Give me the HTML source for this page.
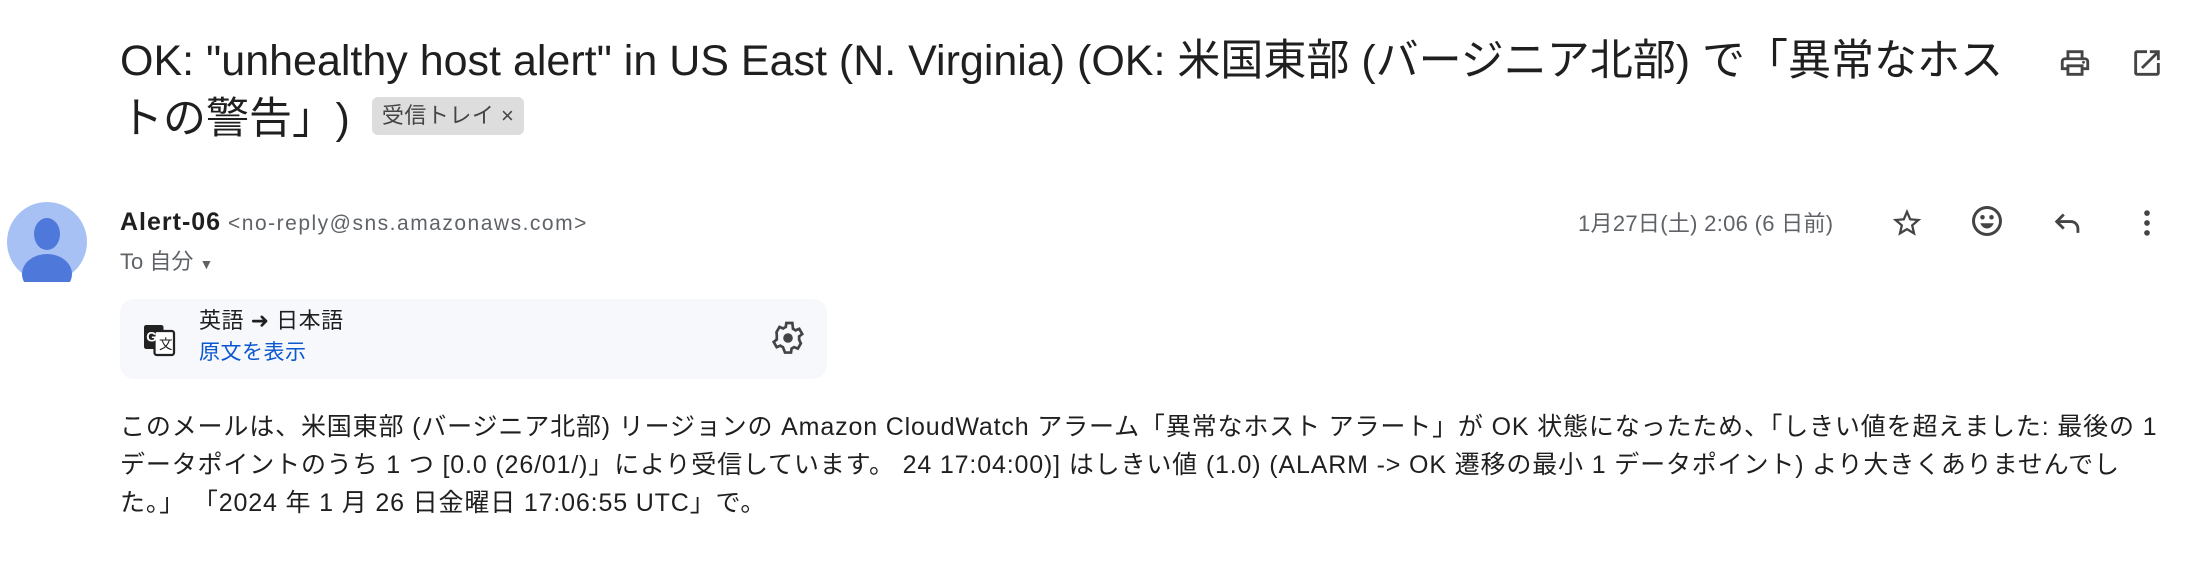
<!DOCTYPE html>
<html><head><meta charset="utf-8"><style>
body{margin:0;width:2208px;height:564px;background:#fff;font-family:"Liberation Sans","Noto Sans CJK JP",sans-serif;color:#1f1f1f;position:relative;overflow:hidden}
.a{position:absolute;white-space:nowrap}
.t{font-size:43px;left:120px;line-height:58px}
.chip{display:inline-block;background:#ddd;color:#444;font-size:22px;line-height:38px;height:38px;padding:0 10px;border-radius:6px;vertical-align:middle;position:relative;top:-6px;margin-left:22px;letter-spacing:0.5px}
.g{color:#5f6368}
.body{font-size:25px;left:120px;line-height:38px;top:408px;letter-spacing:0.85px}
</style></head><body>
<div class="a t" style="top:32px">OK: "unhealthy host alert" in US East (N. Virginia) (OK: 米国東部 (バージニア北部) で「異常なホス</div>
<div class="a t" style="top:90px">トの警告」<span style="margin-left:22px">)</span><span class="chip">受信トレイ ×</span></div>
<svg class="a" style="left:2058px;top:46px" width="34" height="34" viewBox="0 0 24 24" fill="#444"><path d="M19 8h-1V3H6v5H5c-1.66 0-3 1.34-3 3v6h4v4h12v-4h4v-6c0-1.66-1.34-3-3-3zM8 5h8v3H8V5zm8 14H8v-4h8v4zm2-4v-2H6v2H4v-4c0-.55.45-1 1-1h14c.55 0 1 .45 1 1v4h-2z"/><circle cx="18" cy="11.5" r="1"/></svg>
<svg class="a" style="left:2130px;top:46px" width="34" height="34" viewBox="0 0 24 24" fill="#444"><path d="M19 19H5V5h7V3H5c-1.11 0-2 .9-2 2v14c0 1.1.89 2 2 2h14c1.1 0 2-.9 2-2v-7h-2v7zM14 3v2h3.59l-9.83 9.83 1.41 1.41L19 6.41V10h2V3h-7z"/></svg>
<svg class="a" style="left:7px;top:202px" width="80" height="80" viewBox="0 0 80 80"><circle cx="40" cy="40" r="40" fill="#a8c1f5"/><ellipse cx="40" cy="32" rx="13" ry="16" fill="#4f78db"/><ellipse cx="40" cy="72" rx="25" ry="20" fill="#4f78db"/></svg>
<div class="a" style="left:120px;top:206px;font-size:25px;line-height:32px"><b style="letter-spacing:1px">Alert-06</b> <span class="g" style="font-size:21px;letter-spacing:1.5px">&lt;no-reply@sns.amazonaws.com&gt;</span></div>
<div class="a g" style="left:120px;top:246px;font-size:22px;line-height:32px">To 自分 <span style="font-size:14px">▼</span></div>
<div class="a g" style="left:1578px;top:208px;font-size:22px;line-height:32px;letter-spacing:0.3px">1月27日(土) 2:06 (6 日前)</div>
<svg class="a" style="left:1890px;top:206px" width="34" height="34" viewBox="0 0 24 24" fill="#444"><path d="M22 9.24l-7.19-.62L12 2 9.19 8.63 2 9.24l5.46 4.73L5.82 21 12 17.27 18.18 21l-1.63-7.03L22 9.24zM12 15.4l-3.76 2.27 1-4.28-3.32-2.88 4.38-.38L12 6.1l1.71 4.04 4.38.38-3.32 2.88 1 4.28L12 15.4z"/></svg>
<svg class="a" style="left:1969px;top:203px" width="36" height="36" viewBox="0 0 24 24" fill="#444"><path d="M12 2a10 10 0 100 20 10 10 0 000-20zm0 18a8 8 0 110-16 8 8 0 010 16z"/><circle cx="9" cy="9.5" r="1.5"/><circle cx="15" cy="9.5" r="1.5"/><path d="M7.5 13.5h9c-.8 2-2.6 3.5-4.5 3.5s-3.7-1.5-4.5-3.5z"/></svg>
<svg class="a" style="left:2051px;top:206px" width="34" height="34" viewBox="0 0 24 24" fill="none" stroke="#444" stroke-width="2"><path d="M9 6l-5 5 5 5"/><path d="M4 11h10a5 5 0 015 5v3"/></svg>
<svg class="a" style="left:2130px;top:206px" width="34" height="34" viewBox="0 0 24 24" fill="#444"><circle cx="12" cy="5" r="2"/><circle cx="12" cy="12" r="2"/><circle cx="12" cy="19" r="2"/></svg>
<div class="a" style="left:120px;top:299px;width:707px;height:80px;background:#f6f8fc;border-radius:14px"></div>
<svg class="a" style="left:141px;top:322px" width="36" height="36" viewBox="0 0 24 24"><rect x="2" y="2" width="13" height="16" rx="1.5" fill="#222"/><rect x="9" y="6" width="13" height="16" rx="1.5" fill="#fff" stroke="#222" stroke-width="1.5"/><text x="3.5" y="13" font-size="9" fill="#fff" font-family="Liberation Sans" font-weight="bold">G</text><text x="12" y="18" font-size="9" fill="#222" font-family="Noto Sans CJK JP">文</text></svg>
<div class="a" style="left:199px;top:305px;font-size:22px;line-height:32px;letter-spacing:0.5px">英語 ➜ 日本語</div>
<div class="a" style="left:199px;top:337px;font-size:21px;line-height:32px;color:#0b57d0;letter-spacing:0.5px">原文を表示</div>
<svg class="a" style="left:770px;top:320px" width="36" height="36" viewBox="0 0 24 24" fill="none" stroke="#444" stroke-width="1.8"><path d="M19.4 13c.04-.33.06-.66.06-1s-.02-.67-.06-1l2.1-1.65-2-3.46-2.49 1c-.52-.4-1.08-.73-1.69-.98L14.9 2h-4l-.38 2.65c-.61.25-1.17.59-1.69.98l-2.49-1-2 3.46L4.57 11c-.04.33-.07.67-.07 1s.03.67.07 1l-2.11 1.65 2 3.46 2.49-1c.52.4 1.08.73 1.69.98L10 21.7h4l.38-2.65c.61-.25 1.17-.59 1.69-.98l2.49 1 2-3.46L19.4 13z"/><circle cx="12" cy="12" r="2.3" fill="#444"/></svg>
<div class="a body">このメールは、米国東部 (バージニア北部) リージョンの Amazon CloudWatch アラーム「異常なホスト アラート」が OK 状態になったため、「しきい値を超えました: 最後の 1<br>データポイントのうち 1 つ [0.0 (26/01/)」により受信しています。 24 17:04:00)] はしきい値 (1.0) (ALARM -&gt; OK 遷移の最小 1 データポイント) より大きくありませんでし<br>た。」 「2024 年 1 月 26 日金曜日 17:06:55 UTC」で。</div>
</body></html>
